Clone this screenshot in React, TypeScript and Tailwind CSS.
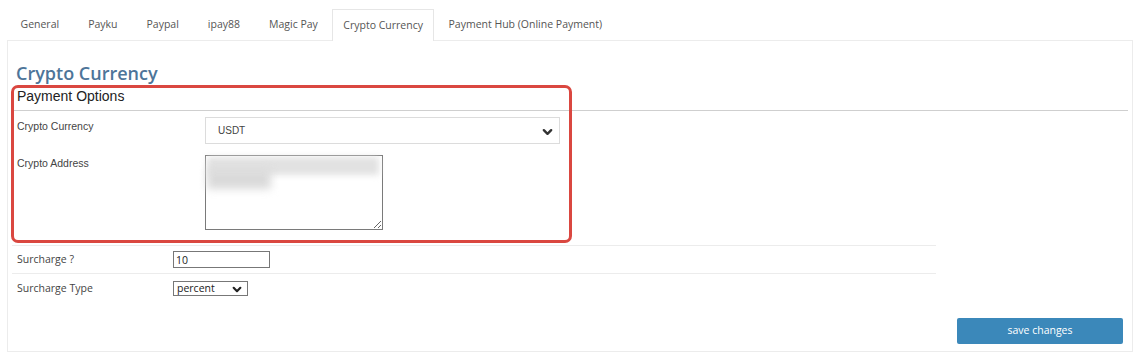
import { useState } from 'react';

const tabs = ['General', 'Payku', 'Paypal', 'ipay88', 'Magic Pay', 'Crypto Currency', 'Payment Hub (Online Payment)'];

function Chevron({ className }: { className?: string }) {
  return (
    <svg viewBox="0 0 12 8" className={className} fill="none" stroke="currentColor" strokeWidth="2.6" strokeLinecap="round" strokeLinejoin="round">
      <polyline points="2,2 6,6 10,2" />
    </svg>
  );
}

export default function App() {
  const [active, setActive] = useState('Crypto Currency');

  return (
    <div className="w-[1141px] h-[359px] bg-white overflow-hidden font-['Open_Sans',sans-serif] text-[#555]">
      {/* tabs */}
      <div className="flex pl-[6px] pt-[9px] h-[40px] relative z-10">
        {tabs.map((t) => (
          <button
            key={t}
            onClick={() => setActive(t)}
            className={
              t === active
                ? 'h-[32px] px-[10px] text-[10.5px] text-[#555] bg-white border border-b-0 border-[#e6e6e6]'
                : 'h-[31px] px-[13.5px] text-[10.5px] text-[#555] border border-transparent'
            }
          >
            {t}
          </button>
        ))}
      </div>

      {/* panel */}
      <div className="relative mx-[7px] w-[1126px] h-[312px] border border-[#ececec] px-[4px]">
        <h2 className="pl-[4px] pt-[20px] text-[18px] leading-[24px] font-semibold text-[#4d7599]">Crypto Currency</h2>

        <div className="pl-[5px] pt-[3px] pb-[5px] border-b border-[#cfcfcf] font-['Liberation_Sans',sans-serif] text-[14px] leading-[17px] text-[#222]">
          Payment Options
        </div>

        <div className="flex items-start pt-[6px] font-['Liberation_Sans',sans-serif] text-[10.5px] text-[#444]">
          <div className="w-[193px] pl-[5px] pt-[2px]">Crypto Currency</div>
          <div className="relative w-[355px] h-[27px] border border-[#dcdcdc] flex items-center pl-[12px]">
            <span className="text-[10px] text-[#444]">USDT</span>
            <Chevron className="absolute right-[6px] top-[10px] w-[11px] h-[8px] text-[#333]" />
          </div>
        </div>

        <div className="flex items-start pt-[11px] font-['Liberation_Sans',sans-serif] text-[10.5px] text-[#444]">
          <div className="w-[193px] pl-[5px] pt-[1px]">Crypto Address</div>
          <div className="relative w-[178px] h-[75px]">
            <textarea className="w-full h-full border border-[#7a7a7a] resize-y" readOnly />
            <div className="absolute left-[2px] top-[2px] w-[172px] h-[18px] bg-[#e2e2e2] blur-[3px]" />
            <div className="absolute left-[2px] top-[14px] w-[64px] h-[20px] bg-[#dadada] blur-[4px]" />
          </div>
        </div>

        <div className="w-[924px] mt-[15px] border-t border-[#ececec]" />
        <div className="flex items-center h-[28px] w-[924px] border-b border-[#ececec] text-[10.5px] text-[#444]">
          <div className="w-[161px] pl-[5px]">Surcharge ?</div>
          <input
            defaultValue="10"
            className="w-[97px] h-[17px] border border-[#777] px-[2px] text-[10.5px] text-[#222] outline-none"
          />
        </div>
        <div className="flex items-center h-[29px] text-[10.5px] text-[#444]">
          <div className="w-[161px] pl-[5px]">Surcharge Type</div>
          <div className="relative w-[75px] h-[15px] border border-[#777] flex items-center pl-[3px] text-[#222]">
            percent
            <Chevron className="absolute right-[5px] top-[4px] w-[10px] h-[7px] text-[#222]" />
          </div>
        </div>

        <div className="flex justify-end pr-[5px] pt-[15px]">
          <button className="w-[166px] h-[26px] rounded-[2px] bg-[#3b88ba] text-white text-[10.5px]">save changes</button>
        </div>

        {/* red annotation box */}
        <div className="absolute left-[3px] top-[44px] w-[561px] h-[158px] border-[3px] border-[#da4740] rounded-[7px] pointer-events-none" />
      </div>
    </div>
  );
}
